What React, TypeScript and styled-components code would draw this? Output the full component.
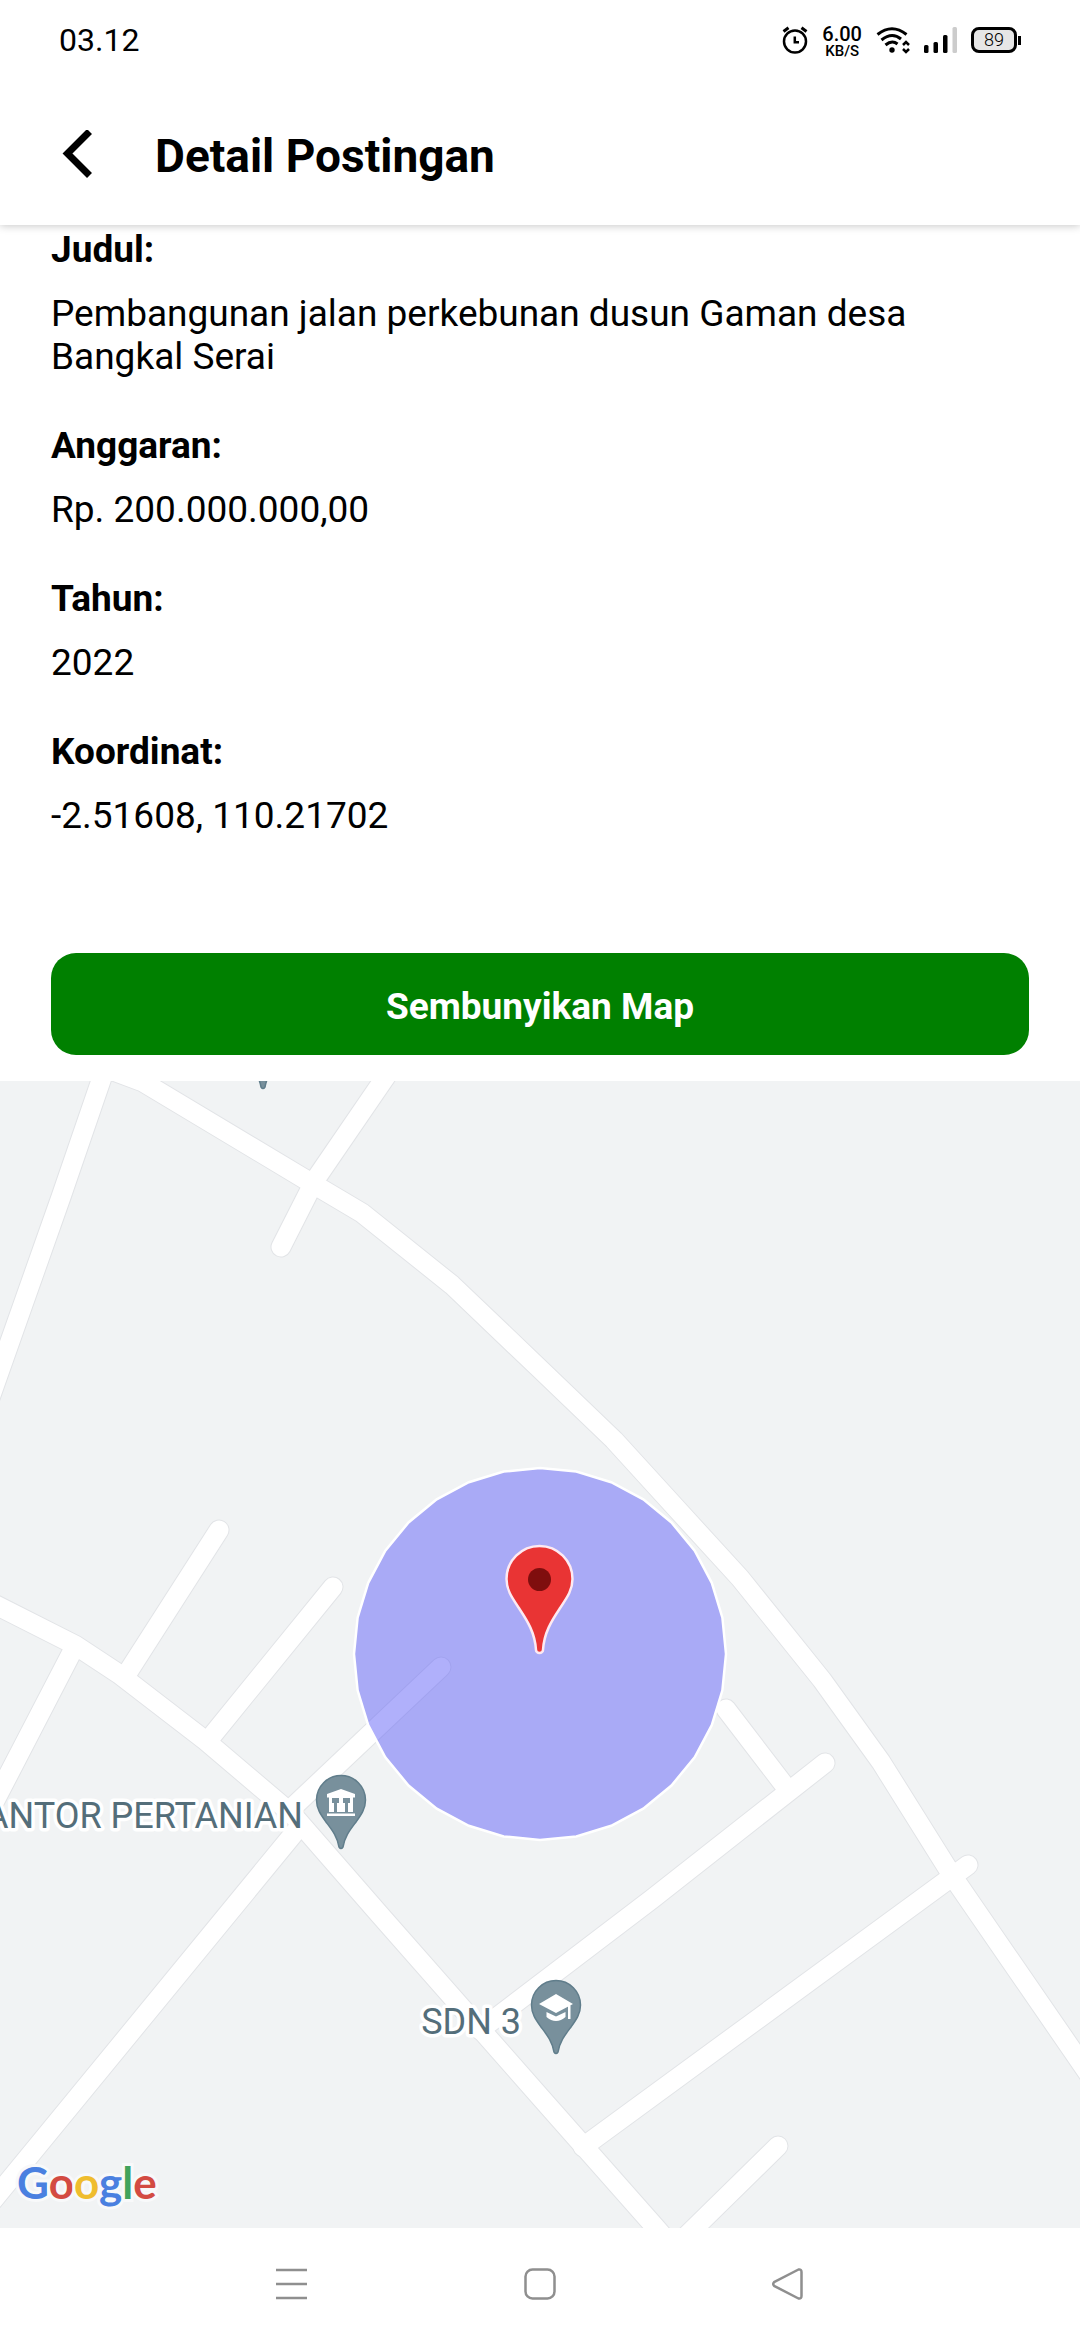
import React, { useState } from "react";
import styled, { createGlobalStyle } from "styled-components";

const GlobalStyle = createGlobalStyle`
  * { box-sizing: border-box; }
  body { margin: 0; background: #ffffff; }
`;

const Screen = styled.div`
  min-height: 100vh;
  display: flex;
  flex-direction: column;
  background: #ffffff;
  color: #000000;
  font-family: Roboto, "Liberation Sans", sans-serif;
`;

const StatusBar = styled.div`
  position: relative;
  z-index: 2;
  height: 80px;
  padding: 0 59px;
  display: flex;
  align-items: center;
  justify-content: space-between;
  background: #ffffff;
`;

const Clock = styled.time`
  font-size: 32px;
  line-height: 38px;
`;

const StatusIcons = styled.div`
  display: flex;
  align-items: center;
  gap: 14px;
`;

const Speed = styled.div`
  display: flex;
  flex-direction: column;
  align-items: center;
  padding-top: 2px;
  font-weight: 500;
`;

const SpeedValue = styled.span`
  font-size: 20px;
  line-height: 20px;
`;

const SpeedUnit = styled.span`
  font-size: 15px;
  line-height: 15px;
`;

const Battery = styled.div`
  display: flex;
  align-items: center;
  gap: 1px;
`;

const BatteryBody = styled.span`
  width: 46px;
  height: 26px;
  border: 3px solid #000000;
  border-radius: 8px;
  background: #e6e6e6;
  font-size: 18px;
  font-weight: 300;
  line-height: 20px;
  text-align: center;
`;

const BatteryTip = styled.span`
  width: 3px;
  height: 9px;
  background: #000000;
`;

const Header = styled.header`
  position: relative;
  z-index: 1;
  height: 145px;
  padding: 6px 51px 0;
  display: flex;
  align-items: center;
  gap: 52px;
  background: #ffffff;
  box-shadow: 0 1px 8px rgba(0, 0, 0, 0.22);
`;

const IconButton = styled.button`
  padding: 0;
  border: 0;
  background: none;
  display: flex;
  align-items: center;
  justify-content: center;
  cursor: pointer;
`;

const BackButton = styled(IconButton)`
  width: 52px;
  height: 52px;
`;

const Title = styled.h1`
  margin: 0;
  font-size: 46px;
  line-height: 54px;
  font-weight: 700;
`;

const Details = styled.dl`
  margin: 0;
  padding: 3px 51px 0;
  display: flex;
  flex-direction: column;
  gap: 46px;
  font-size: 37px;
  line-height: 43px;
`;

const Field = styled.div`
  display: flex;
  flex-direction: column;
  gap: 21px;
`;

const Label = styled.dt`
  font-weight: 700;
`;

const Value = styled.dd`
  margin: 0;
`;

const Actions = styled.div`
  padding: 116px 51px 26px;
`;

const ToggleButton = styled.button`
  width: 100%;
  height: 102px;
  padding: 4px 0 0;
  border: 0;
  border-radius: 25px;
  background: #008000;
  color: #ffffff;
  font-family: inherit;
  font-size: 37px;
  line-height: 43px;
  font-weight: 700;
  cursor: pointer;
`;

const MapArea = styled.section`
  position: relative;
  flex: 1;
  min-height: 600px;
  overflow: hidden;
  background: #f1f3f4;
`;

const MapCanvas = styled.svg`
  position: absolute;
  inset: 0;
  width: 100%;
  height: 100%;
`;

const PlaceLabel = styled.text`
  font-family: Roboto, "Liberation Sans", sans-serif;
  font-size: 36px;
  fill: #546e7a;
  stroke: #ffffff;
  stroke-width: 7px;
  stroke-linejoin: round;
  paint-order: stroke;
  text-anchor: end;
`;

const MapLogo = styled.div`
  position: absolute;
  left: 17px;
  bottom: 20px;
  font-family: Lato, "Liberation Sans", sans-serif;
  font-size: 44px;
  line-height: 52px;
  font-weight: 700;
  -webkit-text-stroke: 6px #f8f9fa;
  paint-order: stroke fill;
`;

const Letter = styled.span<{ $color: string }>`
  color: ${(p) => p.$color};
`;

const NavBar = styled.nav`
  height: 112px;
  display: flex;
  justify-content: center;
`;

const NavButton = styled(IconButton)`
  width: 248px;
`;

const fields = [
  { label: "Judul:", value: "Pembangunan jalan perkebunan dusun Gaman desa Bangkal Serai" },
  { label: "Anggaran:", value: "Rp. 200.000.000,00" },
  { label: "Tahun:", value: "2022" },
  { label: "Koordinat:", value: "-2.51608, 110.21702" },
];

const roads = [
  "108,1060 61,1197 -10,1398",
  "100,1066 143,1082 303,1178 362,1213 452,1285 540,1369 614,1440 676,1508 740,1578 822,1680 881,1762 953,1877 1090,2076",
  "404,1050 315,1180 281,1247",
  "-10,1602 75,1645 119,1674 206,1741 292,1814 380,1915 542,2099 656,2228 675,2250",
  "72,1652 0,1791 -10,1810",
  "128,1672 219,1530",
  "211,1737 333,1587",
  "441,1667 294,1806",
  "300,1826 -10,2204",
  "825,1763 652,1899 480,2030",
  "726,1709 788,1790",
  "968,1865 583,2147",
  "778,2146 672,2250",
];

const areaPoints = Array.from({ length: 32 }, (_, i) => {
  const angle = (i * Math.PI) / 16;
  return `${(540 + 186 * Math.sin(angle)).toFixed(1)},${(1654 - 186 * Math.cos(angle)).toFixed(1)}`;
}).join(" ");

const logoLetters = [
  ["G", "#4a80e0"],
  ["o", "#d34b42"],
  ["o", "#efbd2e"],
  ["g", "#4a80e0"],
  ["l", "#41a35c"],
  ["e", "#d34b42"],
];

function PlacePin({ x, y, children }: { x: number; y: number; children?: React.ReactNode }) {
  return (
    <g transform={`translate(${x} ${y})`}>
      <path
        d="M-2 -2 C-4 -13 -9 -19 -15 -27 C-20 -34 -24.5 -40 -24.5 -49 A24.5 24.5 0 0 1 24.5 -49 C24.5 -40 20 -34 15 -27 C9 -19 4 -13 2 -2 Q0 1 -2 -2Z"
        fill="#78909c"
        stroke="#607d8b"
        strokeWidth="1.5"
      />
      {children}
    </g>
  );
}

function MapView() {
  return (
    <MapArea aria-label="Peta">
      <MapCanvas viewBox="0 1081 1080 1147" preserveAspectRatio="xMidYMid slice">
        <g fill="none" strokeLinecap="round" strokeLinejoin="round">
          {roads.map((points) => (
            <polyline key={points} points={points} stroke="#e2e4e7" strokeWidth="21" />
          ))}
          {roads.map((points) => (
            <polyline key={points} points={points} stroke="#ffffff" strokeWidth="19" />
          ))}
        </g>
        <PlacePin x={263} y={1089} />
        <PlacePin x={341} y={1849}>
          <path d="M-14 -55 L0 -60 L14 -55 V-51.500 H12 V-37 H-12 V-51.500 H-14Z M-14 -35.500 H14 V-33 H-14Z" fill="#ffffff" />
          <path d="M-9 -51 H-2 V-46 H-4 V-37 H-7 V-46 H-9Z M2 -51 H9 V-46 H7 V-37 H4 V-46 H2Z" fill="#78909c" />
        </PlacePin>
        <PlaceLabel x="303" y="1828">ANTOR PERTANIAN</PlaceLabel>
        <PlacePin x={556} y={2054}>
          <path d="M-17 -50 L0 -60 L17 -50 L0 -41Z M12 -50 H14.500 V-35 H12Z" fill="#ffffff" />
          <path d="M-9.500 -42 L0 -37.500 L9.500 -42 V-37 Q5 -33 0 -33 Q-5 -33 -9.500 -37Z" fill="#ffffff" />
        </PlacePin>
        <PlaceLabel x="521" y="2034">SDN 3</PlaceLabel>
        <polygon points={areaPoints} fill="rgba(97, 97, 248, 0.5)" />
        <polygon points={areaPoints} fill="none" stroke="#ffffff" strokeWidth="2.5" />
        <g transform="translate(539.5 1652)">
          <path
            d="M-3.5 -2 C-4.5 -19 -12 -31 -20 -43 C-28 -55 -33 -62 -33 -73 A33 33 0 0 1 33 -73 C33 -62 28 -55 20 -43 C12 -31 4.5 -19 3.5 -2 A3.5 3 0 0 1 -3.5 -2Z"
            fill="#e93434"
            stroke="#fdeaf2"
            strokeWidth="2.5"
          />
          <circle cy="-72.5" r="11.5" fill="#7f0e0e" />
        </g>
      </MapCanvas>
      <MapLogo>
        {logoLetters.map(([letter, color], i) => (
          <Letter key={i} $color={color}>{letter}</Letter>
        ))}
      </MapLogo>
    </MapArea>
  );
}

function AlarmIcon() {
  return (
    <svg width="26" height="28" viewBox="0 0 26 28" fill="none" stroke="#000000">
      <circle cx="13" cy="15.500" r="11" strokeWidth="2.500" />
      <path d="M12.800 10.500 V16.200 H17" strokeWidth="2.500" />
      <path d="M1.500 5.500 L6.500 1.800 M24.500 5.500 L19.500 1.800" strokeWidth="3" />
    </svg>
  );
}

function WifiIcon() {
  return (
    <svg width="34" height="27" viewBox="0 0 34 27" fill="none" stroke="#000000" strokeWidth="3">
      <path d="M1.500 7.500 Q16 -4 30.500 7.500" />
      <path d="M5.500 13 Q16 4.500 25 12" />
      <path d="M9.500 18 Q16 12.500 21.500 17" />
      <circle cx="16" cy="23" r="2.700" fill="#000000" stroke="none" />
      <path d="M27 18 L30 15 L33 18 M27 22 L30 25 L33 22" strokeWidth="2.500" />
    </svg>
  );
}

function SignalIcon() {
  return (
    <svg width="33" height="26" viewBox="0 0 33 26">
      <rect x="0" y="18" width="4.500" height="8" rx="1.500" />
      <rect x="9.500" y="15" width="4.500" height="11" rx="1.500" />
      <rect x="19" y="8" width="4.500" height="18" rx="1.500" />
      <rect x="28.500" y="0" width="4.500" height="26" rx="1.500" fill="#cccccc" />
    </svg>
  );
}

export default function App() {
  const [mapVisible, setMapVisible] = useState(true);

  return (
    <Screen>
      <GlobalStyle />
      <StatusBar>
        <Clock>03.12</Clock>
        <StatusIcons>
          <AlarmIcon />
          <Speed>
            <SpeedValue>6.00</SpeedValue>
            <SpeedUnit>KB/S</SpeedUnit>
          </Speed>
          <WifiIcon />
          <SignalIcon />
          <Battery>
            <BatteryBody>89</BatteryBody>
            <BatteryTip />
          </Battery>
        </StatusIcons>
      </StatusBar>
      <Header>
        <BackButton type="button" aria-label="Kembali">
          <svg width="52" height="52" viewBox="0 0 52 52" fill="none" stroke="#000000" strokeWidth="7">
            <path d="M38.500 1.500 L16.500 23.500 L38.500 45.500" />
          </svg>
        </BackButton>
        <Title>Detail Postingan</Title>
      </Header>
      <Details>
        {fields.map((field) => (
          <Field key={field.label}>
            <Label>{field.label}</Label>
            <Value>{field.value}</Value>
          </Field>
        ))}
      </Details>
      <Actions>
        <ToggleButton type="button" onClick={() => setMapVisible(!mapVisible)}>
          {mapVisible ? "Sembunyikan Map" : "Tampilkan Map"}
        </ToggleButton>
      </Actions>
      {mapVisible && <MapView />}
      <NavBar>
        <NavButton type="button" aria-label="Menu">
          <svg width="32" height="32" viewBox="0 0 32 32" stroke="#8f8f8f" strokeWidth="2.500">
            <path d="M0 2 H31 M0 16 H31 M0 30 H31" />
          </svg>
        </NavButton>
        <NavButton type="button" aria-label="Beranda">
          <svg width="32" height="32" viewBox="0 0 32 32" fill="none" stroke="#8f8f8f" strokeWidth="2.500">
            <rect x="1.500" y="1.500" width="29" height="29" rx="7" />
          </svg>
        </NavButton>
        <NavButton type="button" aria-label="Kembali">
          <svg width="32" height="32" viewBox="0 0 32 32" fill="none" stroke="#8f8f8f" strokeWidth="2.500" strokeLinejoin="round">
            <path d="M2 14.200 L26.500 1.500 Q29.500 1 29.500 4 V28 Q29.500 31 26.500 30.500 L2 17.800 Q0.500 16 2 14.200Z" />
          </svg>
        </NavButton>
      </NavBar>
    </Screen>
  );
}
